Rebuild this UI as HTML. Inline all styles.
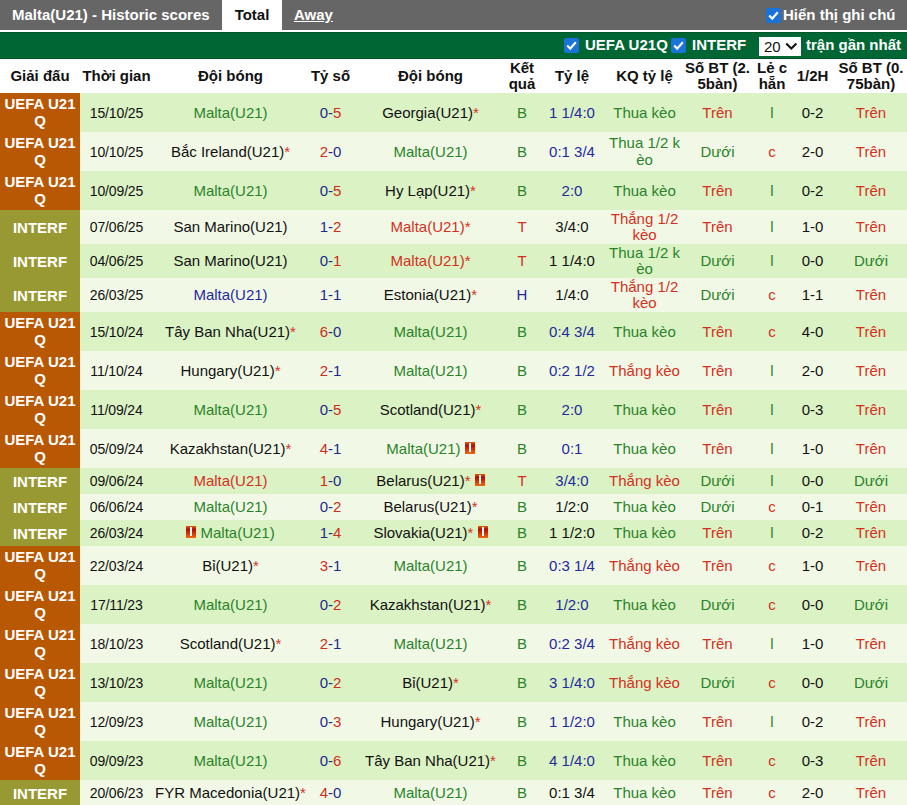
<!DOCTYPE html>
<html><head><meta charset="utf-8">
<style>
*{box-sizing:border-box}
html,body{margin:0;padding:0;background:#fff;width:907px;height:805px;overflow:hidden}
body{font-family:"Liberation Sans",sans-serif;font-size:15px;color:#111}
.top{position:absolute;left:0;top:0;width:907px;height:30px;background:#666}
.tab{position:absolute;top:0;height:30px;line-height:30px;font-weight:bold;color:#fff;white-space:nowrap}
.t1{left:0;width:222px;padding-left:12px}
.t2{left:222px;width:60px;background:#fff;color:#111;text-align:center;height:32px}
.t3{left:294px;text-decoration:underline}
.cb{position:absolute;width:15px;height:15px;background:#1a73d9;border-radius:2px}
.cb svg{position:absolute;left:0;top:0}
.note{position:absolute;left:783px;top:0;line-height:30px;color:#fff;font-weight:bold}
.bar{position:absolute;left:0;top:32px;width:907px;height:27px;background:#006633;border-top:1px solid #00552b;border-bottom:1px solid #00552b}
.bar .lbl{position:absolute;top:-2.5px;line-height:27px;color:#fff;font-weight:bold;white-space:nowrap}
.sel{position:absolute;left:759px;top:4px;width:42px;height:19px;background:#fff;color:#111;font-size:15px;line-height:19px;padding-left:5px}
.sel svg{position:absolute;left:25.5px;top:5px}
table{position:absolute;left:0;top:59px;border-collapse:collapse;table-layout:fixed;width:907px}
td,th{padding:0;text-align:center;vertical-align:middle;white-space:nowrap;line-height:16px}
td{letter-spacing:0;padding-bottom:0}
td.dt{letter-spacing:-0.15px;font-size:14px}
th{font-weight:bold;color:#111;height:34px;background:#fff}
tr.d td{background:#dbf2c4}
tr.l td{background:#f1f9e6}
td.lg{color:#fff;font-weight:bold;line-height:17px}
tr td.u{background:#b95802;padding-bottom:2px}
tr td.i{background:#999933}
.g{color:#2a832a}
.r{color:#d5301f}
.b{color:#1f2a9e}
.k{color:#111}
.st{color:#da2e22}
.sr{color:#cf2c1c}
.sb{color:#1f2a8e}
.kq{line-height:16.5px}
.rc{display:inline-block;width:10px;height:12px;background:linear-gradient(#e2600e 0%,#b40c00 28%,#d43a08 65%,#ee6a10 100%);position:relative;vertical-align:0px;letter-spacing:0}
.rc:after{content:"";position:absolute;left:4px;top:1px;width:2px;height:9px;background:#fff}
</style></head><body>
<div class="top"></div>
<div class="tab t1">Malta(U21) - Historic scores</div>
<div class="tab t2">Total</div>
<div class="tab t3">Away</div>
<div class="cb" style="left:766px;top:8px"><svg width="15" height="15" viewBox="0 0 15 15"><path d="M3.2 7.6 L6.2 10.6 L11.8 4.2" stroke="#fff" stroke-width="2.1" fill="none"/></svg></div>
<div class="note">Hiển thị ghi chú</div>
<div class="bar">
<div class="cb" style="left:564px;top:5px"><svg width="15" height="15" viewBox="0 0 15 15"><path d="M3.2 7.6 L6.2 10.6 L11.8 4.2" stroke="#fff" stroke-width="2.1" fill="none"/></svg></div>
<div class="lbl" style="left:585px">UEFA U21Q</div>
<div class="cb" style="left:671px;top:5px"><svg width="15" height="15" viewBox="0 0 15 15"><path d="M3.2 7.6 L6.2 10.6 L11.8 4.2" stroke="#fff" stroke-width="2.1" fill="none"/></svg></div>
<div class="lbl" style="left:692px">INTERF</div>
<div class="sel">20<svg width="13" height="9" viewBox="0 0 13 9"><path d="M1.2 1.5 L6.3 6.6 L11.4 1.5" stroke="#111" stroke-width="2.1" fill="none"/></svg></div>
<div class="lbl" style="left:806px">trận gần nhất</div>
</div>
<table>
<colgroup><col style="width:80px"><col style="width:73px"><col style="width:155px"><col style="width:45px"><col style="width:155px"><col style="width:28px"><col style="width:72px"><col style="width:73px"><col style="width:73px"><col style="width:36px"><col style="width:45px"><col style="width:72px"></colgroup>
<tr><th>Giải đấu</th><th>Thời gian</th><th>Đội bóng</th><th>Tỷ số</th><th>Đội bóng</th><th>Kết<br>quả</th><th>Tỷ lệ</th><th>KQ tỷ lệ</th><th>Số BT (2.<br>5bàn)</th><th>Lẻ c<br>hẵn</th><th>1/2H</th><th>Số BT (0.<br>75bàn)</th></tr>
<tr class="d" style="height:39px"><td class="lg u">UEFA U21<br>Q</td><td class="dt">15/10/25</td><td><span class="g">Malta(U21)</span></td><td><span class="sb">0</span><span class="sb">-</span><span class="sr">5</span></td><td><span class="k">Georgia(U21)</span><span class="st">*</span></td><td class="g">B</td><td class="b">1 1/4:0</td><td class="g">Thua kèo</td><td class="r">Trên</td><td class="g">l</td><td>0-2</td><td class="r">Trên</td></tr>
<tr class="l" style="height:39px"><td class="lg u">UEFA U21<br>Q</td><td class="dt">10/10/25</td><td><span class="k">Bắc Ireland(U21)</span><span class="st">*</span></td><td><span class="sr">2</span><span class="sb">-</span><span class="sb">0</span></td><td><span class="g">Malta(U21)</span></td><td class="g">B</td><td class="b">0:1 3/4</td><td class="g kq">Thua 1/2 k<br>èo</td><td class="g">Dưới</td><td class="r">c</td><td>2-0</td><td class="r">Trên</td></tr>
<tr class="d" style="height:39px"><td class="lg u">UEFA U21<br>Q</td><td class="dt">10/09/25</td><td><span class="g">Malta(U21)</span></td><td><span class="sb">0</span><span class="sb">-</span><span class="sr">5</span></td><td><span class="k">Hy Lạp(U21)</span><span class="st">*</span></td><td class="g">B</td><td class="b">2:0</td><td class="g">Thua kèo</td><td class="r">Trên</td><td class="g">l</td><td>0-2</td><td class="r">Trên</td></tr>
<tr class="l" style="height:34px"><td class="lg i">INTERF</td><td class="dt">07/06/25</td><td><span class="k">San Marino(U21)</span></td><td><span class="sb">1</span><span class="sb">-</span><span class="sr">2</span></td><td><span class="r">Malta(U21)</span><span class="st">*</span></td><td class="r">T</td><td class="k">3/4:0</td><td class="r kq">Thắng 1/2<br>kèo</td><td class="r">Trên</td><td class="g">l</td><td>1-0</td><td class="r">Trên</td></tr>
<tr class="d" style="height:34px"><td class="lg i">INTERF</td><td class="dt">04/06/25</td><td><span class="k">San Marino(U21)</span></td><td><span class="sb">0</span><span class="sb">-</span><span class="sr">1</span></td><td><span class="r">Malta(U21)</span><span class="st">*</span></td><td class="r">T</td><td class="k">1 1/4:0</td><td class="g kq">Thua 1/2 k<br>èo</td><td class="g">Dưới</td><td class="g">l</td><td>0-0</td><td class="g">Dưới</td></tr>
<tr class="l" style="height:34px"><td class="lg i">INTERF</td><td class="dt">26/03/25</td><td><span class="b">Malta(U21)</span></td><td><span class="sb">1</span><span class="sb">-</span><span class="sb">1</span></td><td><span class="k">Estonia(U21)</span><span class="st">*</span></td><td class="b">H</td><td class="k">1/4:0</td><td class="r kq">Thắng 1/2<br>kèo</td><td class="g">Dưới</td><td class="r">c</td><td>1-1</td><td class="r">Trên</td></tr>
<tr class="d" style="height:39px"><td class="lg u">UEFA U21<br>Q</td><td class="dt">15/10/24</td><td><span class="k">Tây Ban Nha(U21)</span><span class="st">*</span></td><td><span class="sr">6</span><span class="sb">-</span><span class="sb">0</span></td><td><span class="g">Malta(U21)</span></td><td class="g">B</td><td class="b">0:4 3/4</td><td class="g">Thua kèo</td><td class="r">Trên</td><td class="r">c</td><td>4-0</td><td class="r">Trên</td></tr>
<tr class="l" style="height:39px"><td class="lg u">UEFA U21<br>Q</td><td class="dt">11/10/24</td><td><span class="k">Hungary(U21)</span><span class="st">*</span></td><td><span class="sr">2</span><span class="sb">-</span><span class="sb">1</span></td><td><span class="g">Malta(U21)</span></td><td class="g">B</td><td class="b">0:2 1/2</td><td class="r">Thắng kèo</td><td class="r">Trên</td><td class="g">l</td><td>2-0</td><td class="r">Trên</td></tr>
<tr class="d" style="height:39px"><td class="lg u">UEFA U21<br>Q</td><td class="dt">11/09/24</td><td><span class="g">Malta(U21)</span></td><td><span class="sb">0</span><span class="sb">-</span><span class="sr">5</span></td><td><span class="k">Scotland(U21)</span><span class="st">*</span></td><td class="g">B</td><td class="b">2:0</td><td class="g">Thua kèo</td><td class="r">Trên</td><td class="g">l</td><td>0-3</td><td class="r">Trên</td></tr>
<tr class="l" style="height:39px"><td class="lg u">UEFA U21<br>Q</td><td class="dt">05/09/24</td><td><span class="k">Kazakhstan(U21)</span><span class="st">*</span></td><td><span class="sr">4</span><span class="sb">-</span><span class="sb">1</span></td><td><span class="g">Malta(U21)</span> <i class="rc"></i></td><td class="g">B</td><td class="b">0:1</td><td class="g">Thua kèo</td><td class="r">Trên</td><td class="g">l</td><td>1-0</td><td class="r">Trên</td></tr>
<tr class="d" style="height:26px"><td class="lg i">INTERF</td><td class="dt">09/06/24</td><td><span class="r">Malta(U21)</span></td><td><span class="sr">1</span><span class="sb">-</span><span class="sb">0</span></td><td><span class="k">Belarus(U21)</span><span class="st">*</span> <i class="rc"></i></td><td class="r">T</td><td class="b">3/4:0</td><td class="r">Thắng kèo</td><td class="g">Dưới</td><td class="g">l</td><td>0-0</td><td class="g">Dưới</td></tr>
<tr class="l" style="height:26px"><td class="lg i">INTERF</td><td class="dt">06/06/24</td><td><span class="g">Malta(U21)</span></td><td><span class="sb">0</span><span class="sb">-</span><span class="sr">2</span></td><td><span class="k">Belarus(U21)</span><span class="st">*</span></td><td class="g">B</td><td class="k">1/2:0</td><td class="g">Thua kèo</td><td class="g">Dưới</td><td class="r">c</td><td>0-1</td><td class="r">Trên</td></tr>
<tr class="d" style="height:26px"><td class="lg i">INTERF</td><td class="dt">26/03/24</td><td><i class="rc"></i> <span class="g">Malta(U21)</span></td><td><span class="sb">1</span><span class="sb">-</span><span class="sr">4</span></td><td><span class="k">Slovakia(U21)</span><span class="st">*</span> <i class="rc"></i></td><td class="g">B</td><td class="k">1 1/2:0</td><td class="g">Thua kèo</td><td class="r">Trên</td><td class="g">l</td><td>0-2</td><td class="r">Trên</td></tr>
<tr class="l" style="height:39px"><td class="lg u">UEFA U21<br>Q</td><td class="dt">22/03/24</td><td><span class="k">Bỉ(U21)</span><span class="st">*</span></td><td><span class="sr">3</span><span class="sb">-</span><span class="sb">1</span></td><td><span class="g">Malta(U21)</span></td><td class="g">B</td><td class="b">0:3 1/4</td><td class="r">Thắng kèo</td><td class="r">Trên</td><td class="r">c</td><td>1-0</td><td class="r">Trên</td></tr>
<tr class="d" style="height:39px"><td class="lg u">UEFA U21<br>Q</td><td class="dt">17/11/23</td><td><span class="g">Malta(U21)</span></td><td><span class="sb">0</span><span class="sb">-</span><span class="sr">2</span></td><td><span class="k">Kazakhstan(U21)</span><span class="st">*</span></td><td class="g">B</td><td class="b">1/2:0</td><td class="g">Thua kèo</td><td class="g">Dưới</td><td class="r">c</td><td>0-0</td><td class="g">Dưới</td></tr>
<tr class="l" style="height:39px"><td class="lg u">UEFA U21<br>Q</td><td class="dt">18/10/23</td><td><span class="k">Scotland(U21)</span><span class="st">*</span></td><td><span class="sr">2</span><span class="sb">-</span><span class="sb">1</span></td><td><span class="g">Malta(U21)</span></td><td class="g">B</td><td class="b">0:2 3/4</td><td class="r">Thắng kèo</td><td class="r">Trên</td><td class="g">l</td><td>1-0</td><td class="r">Trên</td></tr>
<tr class="d" style="height:39px"><td class="lg u">UEFA U21<br>Q</td><td class="dt">13/10/23</td><td><span class="g">Malta(U21)</span></td><td><span class="sb">0</span><span class="sb">-</span><span class="sr">2</span></td><td><span class="k">Bỉ(U21)</span><span class="st">*</span></td><td class="g">B</td><td class="b">3 1/4:0</td><td class="r">Thắng kèo</td><td class="g">Dưới</td><td class="r">c</td><td>0-0</td><td class="g">Dưới</td></tr>
<tr class="l" style="height:39px"><td class="lg u">UEFA U21<br>Q</td><td class="dt">12/09/23</td><td><span class="g">Malta(U21)</span></td><td><span class="sb">0</span><span class="sb">-</span><span class="sr">3</span></td><td><span class="k">Hungary(U21)</span><span class="st">*</span></td><td class="g">B</td><td class="b">1 1/2:0</td><td class="g">Thua kèo</td><td class="r">Trên</td><td class="g">l</td><td>0-2</td><td class="r">Trên</td></tr>
<tr class="d" style="height:39px"><td class="lg u">UEFA U21<br>Q</td><td class="dt">09/09/23</td><td><span class="g">Malta(U21)</span></td><td><span class="sb">0</span><span class="sb">-</span><span class="sr">6</span></td><td><span class="k">Tây Ban Nha(U21)</span><span class="st">*</span></td><td class="g">B</td><td class="b">4 1/4:0</td><td class="g">Thua kèo</td><td class="r">Trên</td><td class="r">c</td><td>0-3</td><td class="r">Trên</td></tr>
<tr class="l" style="height:26px"><td class="lg i">INTERF</td><td class="dt">20/06/23</td><td><span class="k">FYR Macedonia(U21)</span><span class="st">*</span></td><td><span class="sr">4</span><span class="sb">-</span><span class="sb">0</span></td><td><span class="g">Malta(U21)</span></td><td class="g">B</td><td class="k">0:1 3/4</td><td class="g">Thua kèo</td><td class="r">Trên</td><td class="r">c</td><td>2-0</td><td class="r">Trên</td></tr>
</table>
</body></html>
